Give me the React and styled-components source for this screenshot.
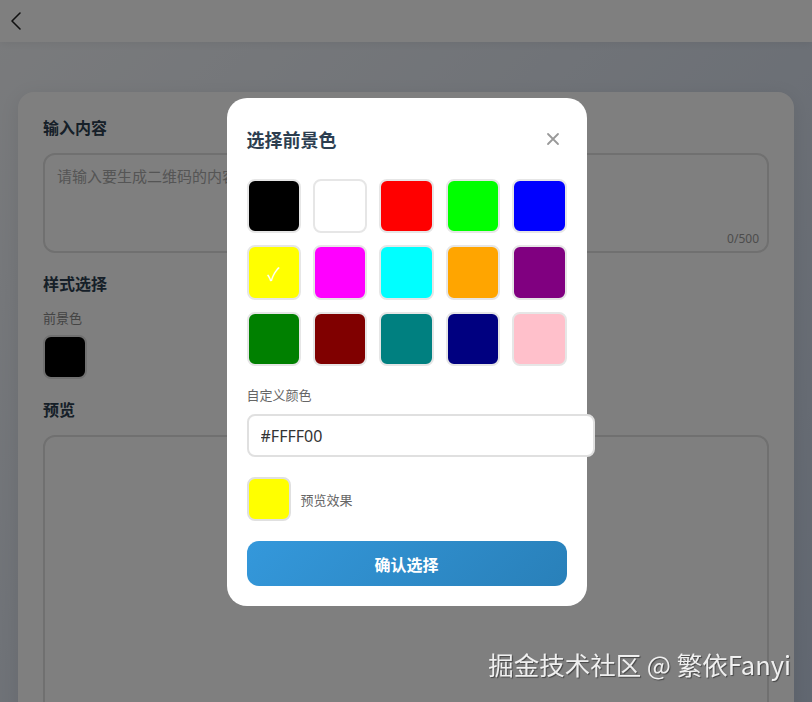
import styled, { createGlobalStyle } from "styled-components";
import { useState } from "react";

const GlobalStyle = createGlobalStyle`
	html, body {
		margin: 0;
		padding: 0;
	}
	body {
		font-family: "Noto Sans", "Noto Sans CJK SC", sans-serif;
		background: linear-gradient(135deg, #f5f7fa 0%, #c3cfe2 100%);
		height: 702px;
		overflow: hidden;
	}
	* {
		box-sizing: border-box;
	}
`;

const Page = styled.div`
	height: 702px;
	overflow: hidden;
	display: flex;
	flex-direction: column;
`;

const Header = styled.div`
	height: 42px;
	flex-shrink: 0;
	background: #ffffff;
	display: flex;
	align-items: center;
	padding-left: 8px;
	box-shadow: 0 2px 8px rgba(0, 0, 0, 0.06);
`;

const BackBtn = styled.div`
	width: 16px;
	height: 20px;
	display: flex;
	align-items: center;
	justify-content: center;
	color: #333;
`;

const Content = styled.div`
	padding: 50px 18px 0;
	display: flex;
	flex-direction: column;
`;

const Card = styled.div`
	background: #ffffff;
	border-radius: 16px;
	padding: 25px;
	height: 660px;
	flex-shrink: 0;
	box-shadow: 0 4px 20px rgba(0, 0, 0, 0.08);
	display: flex;
	flex-direction: column;
`;

const SectionTitle = styled.div`
	font-size: 16px;
	line-height: 22px;
	font-weight: 700;
	color: #2c3e50;
	margin-bottom: 14px;
`;

const TextBox = styled.div`
	position: relative;
	height: 100px;
	flex-shrink: 0;
	border: 2px solid #e0e0e0;
	border-radius: 12px;
	padding: 10px 12px;
	font-size: 15px;
	color: #aaa;
	margin-bottom: 20px;
`;

const Counter = styled.span`
	position: absolute;
	right: 8px;
	bottom: 4px;
	font-size: 12px;
	color: #999;
`;

const SmallLabel = styled.div`
	font-size: 13px;
	line-height: 18px;
	color: #888;
	margin-bottom: 8px;
`;

const Swatch = styled.div`
	width: ${(p) => p.size || 44}px;
	height: ${(p) => p.size || 44}px;
	border-radius: 8px;
	border: 2px solid #e0e0e0;
	background: ${(p) => p.color};
	flex-shrink: 0;
`;

const StyleBlock = styled.div`
	margin-bottom: 20px;
`;

const PreviewBox = styled.div`
	flex: 1;
	border: 2px solid #e0e0e0;
	border-radius: 12px;
`;

const Overlay = styled.div`
	position: fixed;
	inset: 0;
	background: rgba(0, 0, 0, 0.5);
	display: flex;
	align-items: center;
	justify-content: center;
`;

const Modal = styled.div`
	width: 360px;
	background: #ffffff;
	border-radius: 20px;
	padding: 20px;
	margin: 2px 0 0 1px;
`;

const ModalHead = styled.div`
	height: 42px;
	display: flex;
	align-items: center;
	justify-content: space-between;
	margin-bottom: 19px;
`;

const ModalTitle = styled.div`
	font-size: 18px;
	font-weight: 700;
	color: #2c3e50;
`;

const CloseBtn = styled.div`
	width: 24px;
	height: 24px;
	display: flex;
	align-items: center;
	justify-content: center;
	margin-right: 2px;
`;

const Grid = styled.div`
	display: grid;
	grid-template-columns: repeat(5, 1fr);
	gap: 12px;
	margin-bottom: 20px;
`;

const Cell = styled.div`
	aspect-ratio: 1;
	border-radius: 8px;
	border: 2px solid #e6e6e6;
	background: ${(p) => p.color};
	display: flex;
	align-items: center;
	justify-content: center;
	color: #fff;
	font-size: 18px;
	cursor: pointer;
`;

const FieldLabel = styled.div`
	font-size: 13px;
	line-height: 18px;
	color: #666;
	margin-bottom: 10px;
`;

const HexInput = styled.input`
	width: 100%;
	box-sizing: content-box;
	padding: 10px 12px;
	height: 19px;
	font-size: 16px;
	font-family: "Noto Sans", "Noto Sans CJK SC", sans-serif;
	color: #333;
	border: 2px solid #e0e0e0;
	border-radius: 8px;
	outline: none;
	display: block;
`;

const PreviewRow = styled.div`
	display: flex;
	align-items: center;
	gap: 10px;
	margin-top: 20px;
`;

const PreviewText = styled.span`
	font-size: 13px;
	color: #666;
`;

const ConfirmBtn = styled.button`
	width: 100%;
	height: 45px;
	margin-top: 20px;
	border: none;
	border-radius: 12px;
	background: linear-gradient(135deg, #3498db 0%, #2980b9 100%);
	color: #fff;
	font-size: 16px;
	font-weight: 700;
	font-family: "Noto Sans", "Noto Sans CJK SC", sans-serif;
	display: block;
`;

const Watermark = styled.div`
	position: fixed;
	right: 21px;
	bottom: 20px;
	font-size: 25.5px;
	color: rgba(255, 255, 255, 0.9);
	text-shadow: 1px 1px 1px rgba(0, 0, 0, 0.45);
	font-family: "Noto Sans CJK SC", "Noto Sans", sans-serif;
`;

const colors = [
	"#000000", "#FFFFFF", "#FF0000", "#00FF00", "#0000FF",
	"#FFFF00", "#FF00FF", "#00FFFF", "#FFA500", "#800080",
	"#008000", "#800000", "#008080", "#000080", "#FFC0CB",
];

const App = () => {
	const [picked, setPicked] = useState("#FFFF00");

	return (
		<>
			<GlobalStyle />
			<Page>
				<Header>
					<BackBtn>
						<svg width="12" height="20" viewBox="0 0 12 20" fill="none">
							<polyline points="10,2 2,10 10,18" stroke="#222" strokeWidth="1.6" strokeLinecap="round" strokeLinejoin="round" />
						</svg>
					</BackBtn>
				</Header>
				<Content>
					<Card>
						<SectionTitle>输入内容</SectionTitle>
						<TextBox>
							请输入要生成二维码的内容...
							<Counter>0/500</Counter>
						</TextBox>
						<SectionTitle>样式选择</SectionTitle>
						<StyleBlock>
							<SmallLabel>前景色</SmallLabel>
							<Swatch color="#000000" />
						</StyleBlock>
						<SectionTitle>预览</SectionTitle>
						<PreviewBox />
					</Card>
				</Content>
			</Page>

			<Overlay>
				<Modal>
					<ModalHead>
						<ModalTitle>选择前景色</ModalTitle>
						<CloseBtn>
							<svg width="14" height="14" viewBox="0 0 14 14">
								<path d="M2 2L12 12M12 2L2 12" stroke="#999" strokeWidth="1.8" strokeLinecap="round" />
							</svg>
						</CloseBtn>
					</ModalHead>
					<Grid>
						{colors.map((c) => (
							<Cell key={c} color={c} onClick={() => setPicked(c)}>
								{picked === c ? "✓" : ""}
							</Cell>
						))}
					</Grid>
					<FieldLabel>自定义颜色</FieldLabel>
					<HexInput value={picked} onChange={(e) => setPicked(e.target.value)} />
					<PreviewRow>
						<Swatch color={picked} />
						<PreviewText>预览效果</PreviewText>
					</PreviewRow>
					<ConfirmBtn>确认选择</ConfirmBtn>
				</Modal>
			</Overlay>

			<Watermark>掘金技术社区 @ 繁依Fanyi</Watermark>
		</>
	);
};

export default App;
